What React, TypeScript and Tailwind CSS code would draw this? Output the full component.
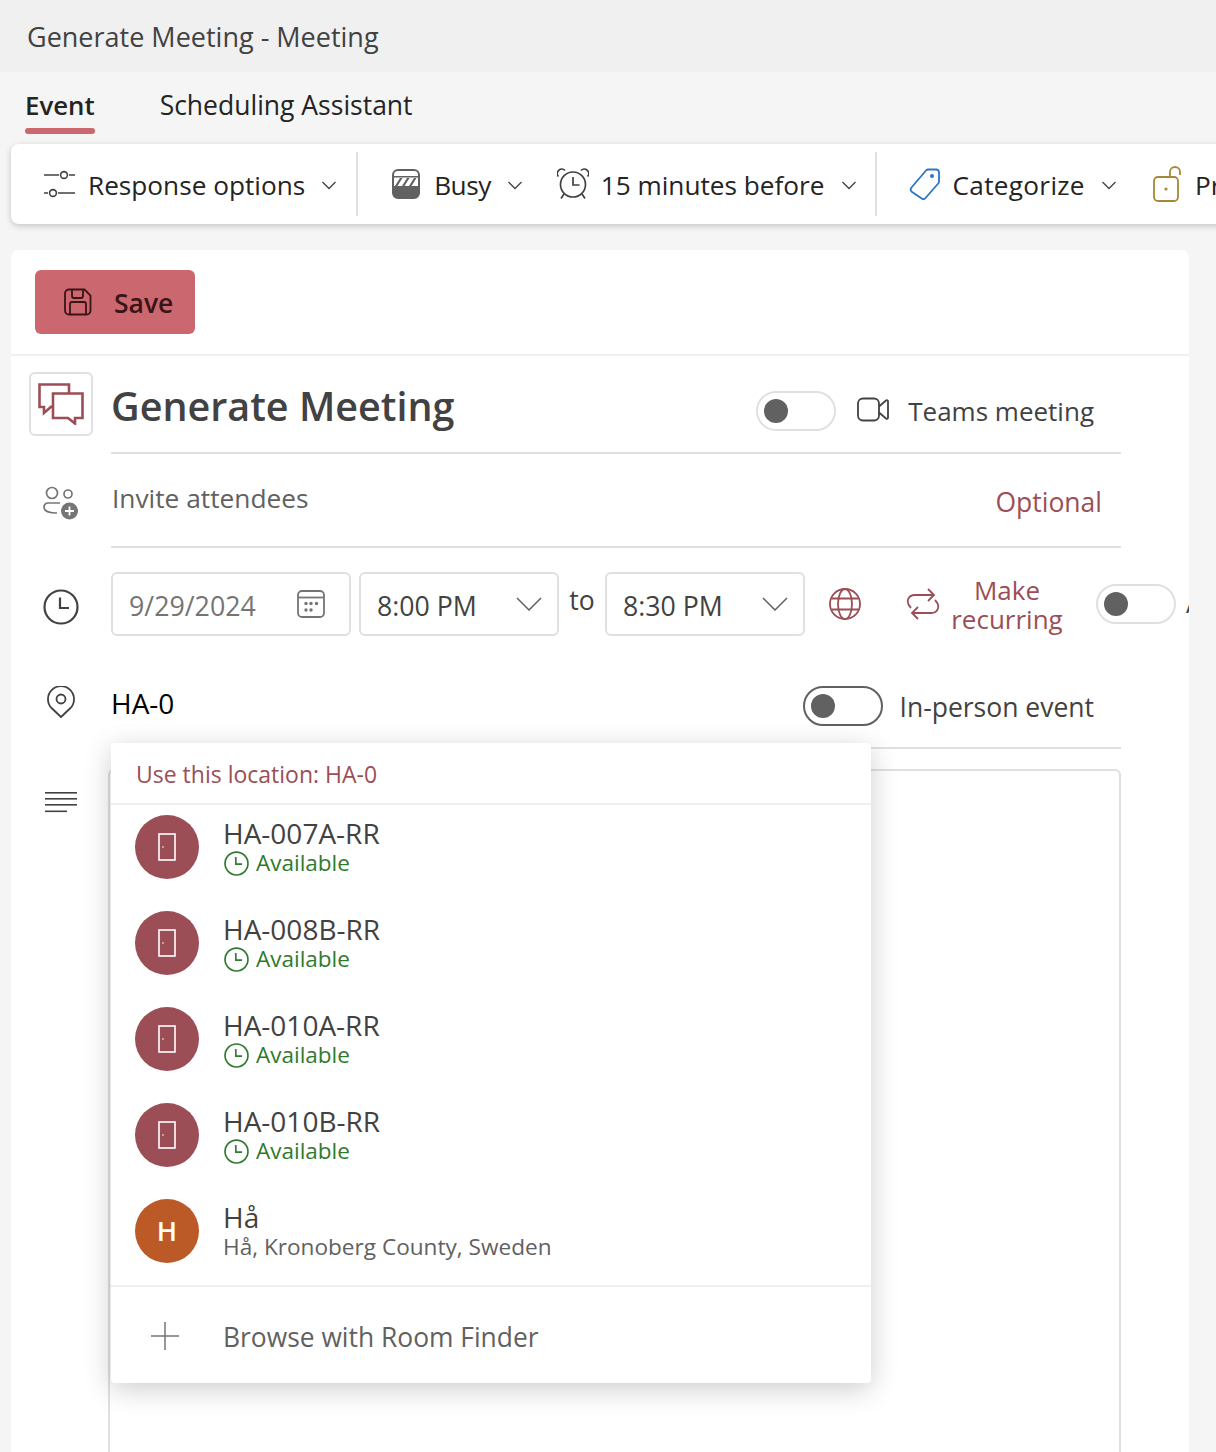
const FONT = "font-['Open_Sans',sans-serif]";

function Chevron({ className = "" }: { className?: string }) {
    return (
        <svg width="16" height="16" viewBox="0 0 16 16" fill="none" className={className}>
            <path d="M1.500 5 8 11.500 14.500 5" stroke="#424242" strokeWidth="1.300" />
        </svg>
    );
}

function BigChevron() {
    return (
        <svg width="26" height="14" viewBox="0 0 26 14" fill="none">
            <path d="M1 1l12 12L25 1" stroke="#616161" strokeWidth="1.500" />
        </svg>
    );
}

function SlidersIcon() {
    return (
        <svg width="32" height="32" viewBox="0 0 32 32" fill="none" stroke="#424242" strokeWidth="1.600">
            <path d="M0 7h15M25 7h6M0 25h4M14 25h17" />
            <circle cx="20" cy="7" r="3.400" />
            <circle cx="9" cy="25" r="3.400" />
        </svg>
    );
}

function BusyIcon() {
    return (
        <svg width="28" height="30" viewBox="0 0 28 30">
            <rect x="1" y="1" width="26" height="28" rx="5" fill="#fff" stroke="#616161" strokeWidth="2" />
            <path d="M1 17h26v7a5 5 0 0 1-5 5H6a5 5 0 0 1-5-5z" fill="#616161" />
            <path d="M0 7h28v1.500H0z" fill="#616161" />
            <path d="M3 17l5-8h2.500l-5 8zM10 17l5-8h2.500l-5 8zM17 17l5-8h2.500l-5 8z" fill="#616161" />
        </svg>
    );
}

function AlarmIcon() {
    return (
        <svg width="32" height="32" viewBox="0 0 32 32" fill="none" stroke="#424242" strokeWidth="1.700">
            <circle cx="16" cy="16.500" r="12.500" />
            <path d="M16 9v8h6.500" />
            <path d="M1.500 8.500a4 4 0 0 1 6.500-6M30.500 8.500a4 4 0 0 0-6.500-6M7 26l-3 4.500M25 26l3 4.500" />
        </svg>
    );
}

function TagIcon() {
    return (
        <svg width="32" height="34" viewBox="0 0 32 34" fill="none">
            <path
                d="M2.500 20.500 17 3.500a3 3 0 0 1 2.200-1H27a3 3 0 0 1 3 3v9a3 3 0 0 1-.8 2L16.500 31a3 3 0 0 1-4.200.3L2.800 24.700a3 3 0 0 1-.3-4.200Z"
                stroke="#2b76c9"
                strokeWidth="1.800"
            />
            <circle cx="23" cy="9" r="2" fill="#2b76c9" />
        </svg>
    );
}

function LockIcon() {
    return (
        <svg width="32" height="36" viewBox="0 0 32 36" fill="none" stroke="#a88838" strokeWidth="1.800">
            <rect x="2" y="11" width="24" height="24" rx="4" />
            <path d="M18 11V6a5 5 0 0 1 10 0v3" />
            <circle cx="14" cy="23" r="1.600" fill="#a88838" stroke="none" />
        </svg>
    );
}

function SaveIcon() {
    return (
        <svg width="28" height="28" viewBox="0 0 28 28" fill="none" stroke="#3a1417" strokeWidth="1.800">
            <path d="M5 1.500h15.500l6 6V22.500a4 4 0 0 1-4 4H5a4 4 0 0 1-4-4v-17a4 4 0 0 1 4-4Z" />
            <path d="M8 2v6a2 2 0 0 0 2 2h7a2 2 0 0 0 2-2V2M6 26V16a2 2 0 0 1 2-2h12a2 2 0 0 1 2 2v10" />
        </svg>
    );
}

function ChatIcon() {
    return (
        <svg width="46" height="42" viewBox="0 0 46 42" fill="none" stroke="#9c4e56" strokeWidth="2.600">
            <path d="M31 10V1.500H1.500V24h4.500v6l8-7" />
            <path d="M15 10.500h29.500V35H37v5.500L30 35H15Z" />
        </svg>
    );
}

function VideoIcon() {
    return (
        <svg width="32" height="26" viewBox="0 0 32 26" fill="none" stroke="#424242" strokeWidth="1.800">
            <rect x="1" y="1.500" width="21" height="22" rx="5" />
            <path d="M22 9.500 29 3.500a1.200 1.200 0 0 1 2 1v16a1.200 1.200 0 0 1-2 1l-7-6" />
        </svg>
    );
}

function PeopleAddIcon() {
    return (
        <svg width="36" height="34" viewBox="0 0 36 34" fill="none" stroke="#757575" strokeWidth="1.700">
            <circle cx="9" cy="7" r="5.500" />
            <circle cx="25" cy="8" r="4" />
            <path d="M17 17H5a4 4 0 0 0-4 4c0 4 5 6 13 6" />
            <circle cx="26.500" cy="25" r="8.500" fill="#757575" stroke="none" />
            <path d="M26.500 20.500v9M22 25h9" stroke="#fff" strokeWidth="1.800" />
        </svg>
    );
}

function ClockIcon({ size = 36, color = "#424242", width = 2.2 }: { size?: number; color?: string; width?: number }) {
    return (
        <svg width={size} height={size} viewBox="0 0 36 36" fill="none" stroke={color} strokeWidth={width}>
            <circle cx="18" cy="18" r="16.500" />
            <path d="M17 8.500V19h9" />
        </svg>
    );
}

function CalendarIcon() {
    return (
        <svg width="28" height="28" viewBox="0 0 28 28" fill="none" stroke="#757575" strokeWidth="1.800">
            <rect x="1" y="1" width="26" height="26" rx="4" />
            <path d="M1 7.500h26" />
            <g fill="#757575" stroke="none">
                <circle cx="9" cy="13.500" r="1.700" />
                <circle cx="14" cy="13.500" r="1.700" />
                <circle cx="19.500" cy="13.500" r="1.700" />
                <circle cx="9" cy="20" r="1.700" />
                <circle cx="14" cy="20" r="1.700" />
            </g>
        </svg>
    );
}

function GlobeIcon() {
    return (
        <svg width="32" height="32" viewBox="0 0 32 32" fill="none" stroke="#9c4e56" strokeWidth="1.800">
            <circle cx="16" cy="16" r="15" />
            <ellipse cx="16" cy="16" rx="7" ry="15" />
            <path d="M2.500 10.500h27M2.500 21.500h27" />
        </svg>
    );
}

function RepeatIcon() {
    return (
        <svg width="34" height="32" viewBox="0 0 34 32" fill="none" stroke="#9c4e56" strokeWidth="1.800">
            <path d="M5 20C-1 14 2 7 9 7h19M22 1l6 6-6 6" />
            <path d="M29 12c6 6 3 13-4 13H6M12 19l-6 6 6 6" />
        </svg>
    );
}

function PinIcon() {
    return (
        <svg width="28" height="32" viewBox="0 0 28 32" fill="none" stroke="#424242" strokeWidth="1.800">
            <path d="M14 31 4.500 22A13 13 0 1 1 23.500 22Z" strokeLinejoin="round" />
            <circle cx="14" cy="13" r="4.500" />
        </svg>
    );
}

function LinesIcon() {
    return (
        <svg width="32" height="22" viewBox="0 0 32 22" fill="#424242">
            <rect x="0" y="0" width="32" height="1.600" />
            <rect x="0" y="6" width="32" height="1.600" />
            <rect x="0" y="12" width="32" height="1.600" />
            <rect x="0" y="18.500" width="22" height="1.600" />
        </svg>
    );
}

function DoorIcon() {
    return (
        <svg width="18" height="28" viewBox="0 0 18 28" fill="none" stroke="#fff" strokeWidth="1.600">
            <rect x="1" y="1" width="16" height="26" />
            <circle cx="5" cy="14" r="0.800" fill="#fff" stroke="none" />
        </svg>
    );
}

function PlusIcon() {
    return (
        <svg width="30" height="30" viewBox="0 0 30 30" stroke="#757575" strokeWidth="1.500" className="mb-[4px]">
            <path d="M15 1v28M1 15h28" />
        </svg>
    );
}

function Toggle({ dark = false, className = "" }: { dark?: boolean; className?: string }) {
    return (
        <div
            className={`flex items-center shrink-0 w-[80px] h-[40px] rounded-full border-2 pl-[6px] ${
                dark ? "border-[#616161]" : "border-[#e0e0e0]"
            } ${className}`}
        >
            <div className="w-[24px] h-[24px] rounded-full bg-[#616161]" />
        </div>
    );
}

function ToolbarItem({
    icon,
    label,
    gap = "gap-[13px]",
    labelClass = "",
}: {
    icon: React.ReactNode;
    label: string;
    gap?: string;
    labelClass?: string;
}) {
    return (
        <div className="flex items-center shrink-0">
            <div className={`flex items-center ${gap}`}>
                {icon}
                <span className={`text-[#242424] text-[26.200px] whitespace-nowrap mt-[4px] ${labelClass}`}>
                    {label}
                </span>
            </div>
            <Chevron className="ml-[16px] mt-[2px]" />
        </div>
    );
}

const rooms = ["HA-007A-RR", "HA-008B-RR", "HA-010A-RR", "HA-010B-RR"];

function RoomRow({ name }: { name: string }) {
    return (
        <div className="h-[96px] pt-[10px] pl-[24px]">
            <div className="flex items-center h-[64px] gap-[24px]">
                <div className="flex items-center justify-center w-[64px] h-[64px] rounded-full bg-[#9c4e56]">
                    <DoorIcon />
                </div>
                <div className="flex flex-col">
                    <span className="text-[#424242] text-[28px] leading-[32px]">{name}</span>
                    <div className="flex items-center gap-[7px] h-[28px] ml-[1px]">
                        <ClockIcon size={25} color="#2f7a2f" width={2.4} />
                        <span className="text-[#2f7a2f] text-[22.500px] leading-[28px]">Available</span>
                    </div>
                </div>
            </div>
        </div>
    );
}

function LocationMenu() {
    return (
        <div className="absolute left-[100px] top-[107px] w-[760px] h-[640px] bg-white rounded-[4px] shadow-[0_6px_28px_rgba(0,0,0,0.2)] z-10 flex flex-col">
            <div className="flex items-center h-[62px] pl-[25px] pt-[2px] border-b-2 border-[#f0f0f0]">
                <span className="text-[#9c4e56] text-[23px]">Use this location: HA-0</span>
            </div>
            {rooms.map((room) => (
                <RoomRow key={room} name={room} />
            ))}
            <div className="h-[96px] pt-[10px] pl-[24px]">
                <div className="flex items-center h-[64px] gap-[24px]">
                    <div className="flex items-center justify-center w-[64px] h-[64px] rounded-full bg-[#bc5a27] text-white text-[27px] font-semibold">
                        H
                    </div>
                    <div className="flex flex-col">
                        <span className="text-[#424242] text-[28px] leading-[32px]">Hå</span>
                        <span className="text-[#616161] text-[22.600px] leading-[28px]">
                            Hå, Kronoberg County, Sweden
                        </span>
                    </div>
                </div>
            </div>
            <div className="flex items-center flex-1 border-t-2 border-[#f0f0f0] pl-[39px] pt-[6px] gap-[43px]">
                <PlusIcon />
                <span className="text-[#616161] text-[26.400px]">Browse with Room Finder</span>
            </div>
        </div>
    );
}

export default function App() {
    return (
        <div className={`w-[1216px] h-[1452px] overflow-hidden bg-[#f5f5f5] ${FONT}`}>
            <div className="flex items-center h-[72px] pl-[27px] pt-[3px] bg-[#f0f0f0] text-[#424242] text-[27px]">
                Generate Meeting - Meeting
            </div>

            <div className="flex h-[72px] pl-[25px] gap-[65px]">
                <div className="flex flex-col items-stretch">
                    <span className="h-[56px] pt-[10px] flex items-center text-[#242424] text-[25.800px] font-semibold">
                        Event
                    </span>
                    <div className="h-[6px] rounded-[3px] bg-[#cb676e]" />
                </div>
                <span className="h-[56px] pt-[12px] flex items-center text-[#242424] text-[26.500px]">
                    Scheduling Assistant
                </span>
            </div>

            <div className="flex items-center ml-[11px] w-[1300px] h-[80px] bg-white rounded-[8px] shadow-[0_2px_6px_rgba(0,0,0,0.2)]">
                <div className="flex items-center shrink-0 pl-[33px] pr-[19px]">
                    <ToolbarItem icon={<SlidersIcon />} label="Response options" gap="gap-[12px]" />
                </div>
                <div className="w-[2px] h-[64px] shrink-0 bg-[#e0e0e0]" />
                <div className="flex items-center shrink-0 pl-[34px] pr-[18px] gap-[34px]">
                    <ToolbarItem icon={<BusyIcon />} label="Busy" gap="gap-[14px]" labelClass="tracking-[-0.5px]" />
                    <ToolbarItem icon={<AlarmIcon />} label="15 minutes before" gap="gap-[12px]" />
                </div>
                <div className="w-[2px] h-[64px] shrink-0 bg-[#e0e0e0]" />
                <div className="flex items-center shrink-0 pl-[32px] gap-[35px]">
                    <ToolbarItem
                        icon={<TagIcon />}
                        label="Categorize"
                        gap="gap-[12px]"
                        labelClass="tracking-[0.3px]"
                    />
                    <ToolbarItem icon={<LockIcon />} label="Private" gap="gap-[11px]" />
                </div>
            </div>

            <div className="mt-[26px] ml-[11px] w-[1178px] h-[1300px] bg-white rounded-[8px] overflow-hidden">
                <div className="h-[106px] pt-[20px] pl-[24px] border-b-2 border-[#f0f0f0]">
                    <div className="flex items-center gap-[22px] w-[160px] h-[64px] pl-[29px] rounded-[6px] bg-[#cb676e]">
                        <SaveIcon />
                        <span className="text-[#3a1417] text-[26.500px] font-semibold mt-[4px]">Save</span>
                    </div>
                </div>

                <div className="flex pt-[16px]">
                    <div className="flex justify-center w-[100px] shrink-0">
                        <div className="flex items-center justify-center w-[64px] h-[64px] rounded-[6px] border-2 border-[#e0e0e0]">
                            <ChatIcon />
                        </div>
                    </div>
                    <div className="flex items-center w-[1010px] h-[82px] pb-[16px] border-b-2 border-[#e0e0e0]">
                        <span className="text-[#424242] text-[39.500px] font-semibold flex-1 mt-[6px]">
                            Generate Meeting
                        </span>
                        <Toggle className="mt-[14px]" />
                        <div className="ml-[21px] mr-[19px] mt-[12px]">
                            <VideoIcon />
                        </div>
                        <span className="text-[#424242] text-[26px] pr-[27px] mt-[14px]">Teams meeting</span>
                    </div>
                </div>

                <div className="flex h-[94px]">
                    <div className="flex justify-center items-center w-[100px] shrink-0 mt-[4px]">
                        <PeopleAddIcon />
                    </div>
                    <div className="flex justify-between items-center w-[1010px] border-b-2 border-[#e0e0e0] pl-[1px] pr-[19px]">
                        <span className="text-[#616161] text-[26.300px] mt-[-2px]">Invite attendees</span>
                        <span className="text-[#9c4e56] text-[26.500px] mt-[5px]">Optional</span>
                    </div>
                </div>

                <div className="flex items-center h-[64px] mt-[24px] whitespace-nowrap">
                    <div className="flex justify-center w-[100px] shrink-0 mt-[6px]">
                        <ClockIcon />
                    </div>
                    <div className="flex items-center justify-between shrink-0 w-[240px] h-[64px] rounded-[6px] border-2 border-[#e0e0e0] pl-[16px] pr-[24px]">
                        <span className="text-[#757575] text-[26.800px] mt-[4px]">9/29/2024</span>
                        <CalendarIcon />
                    </div>
                    <div className="flex items-center justify-between shrink-0 w-[200px] h-[64px] ml-[8px] rounded-[6px] border-2 border-[#e0e0e0] pl-[16px] pr-[15px]">
                        <span className="text-[#424242] text-[26.700px] mt-[4px]">8:00 PM</span>
                        <BigChevron />
                    </div>
                    <span className="w-[46px] shrink-0 text-center text-[#424242] text-[26.500px] mt-[-6px]">to</span>
                    <div className="flex items-center justify-between shrink-0 w-[200px] h-[64px] rounded-[6px] border-2 border-[#e0e0e0] pl-[16px] pr-[15px]">
                        <span className="text-[#424242] text-[26.700px] mt-[4px]">8:30 PM</span>
                        <BigChevron />
                    </div>
                    <div className="ml-[24px] shrink-0">
                        <GlobeIcon />
                    </div>
                    <div className="ml-[45px] shrink-0">
                        <RepeatIcon />
                    </div>
                    <span className="w-[134px] shrink-0 whitespace-normal text-center text-[#9c4e56] text-[26px] leading-[29px] mt-[2px]">
                        Make recurring
                    </span>
                    <Toggle className="ml-[22px]" />
                    <span className="ml-[10px] text-[#424242] text-[26.500px]">All day</span>
                </div>

                <div className="flex h-[113px] relative">
                    <div className="flex justify-center w-[100px] shrink-0 pt-[50px]">
                        <PinIcon />
                    </div>
                    <div className="flex items-start w-[1010px] h-[113px] border-b-2 border-[#e0e0e0]">
                        <span className="text-black text-[28px] flex-1 mt-[46px]">HA-0</span>
                        <Toggle dark className="mt-[50px]" />
                        <span className="text-[#424242] text-[26.500px] ml-[16px] pr-[27px] mt-[52px]">
                            In-person event
                        </span>
                    </div>
                    <LocationMenu />
                </div>

                <div className="flex mt-[20px]">
                    <div className="flex justify-center w-[97px] shrink-0 pt-[23px] pl-[2px]">
                        <LinesIcon />
                    </div>
                    <div className="w-[1013px] h-[700px] rounded-[6px] border-2 border-[#e0e0e0]" />
                </div>
            </div>
        </div>
    );
}
